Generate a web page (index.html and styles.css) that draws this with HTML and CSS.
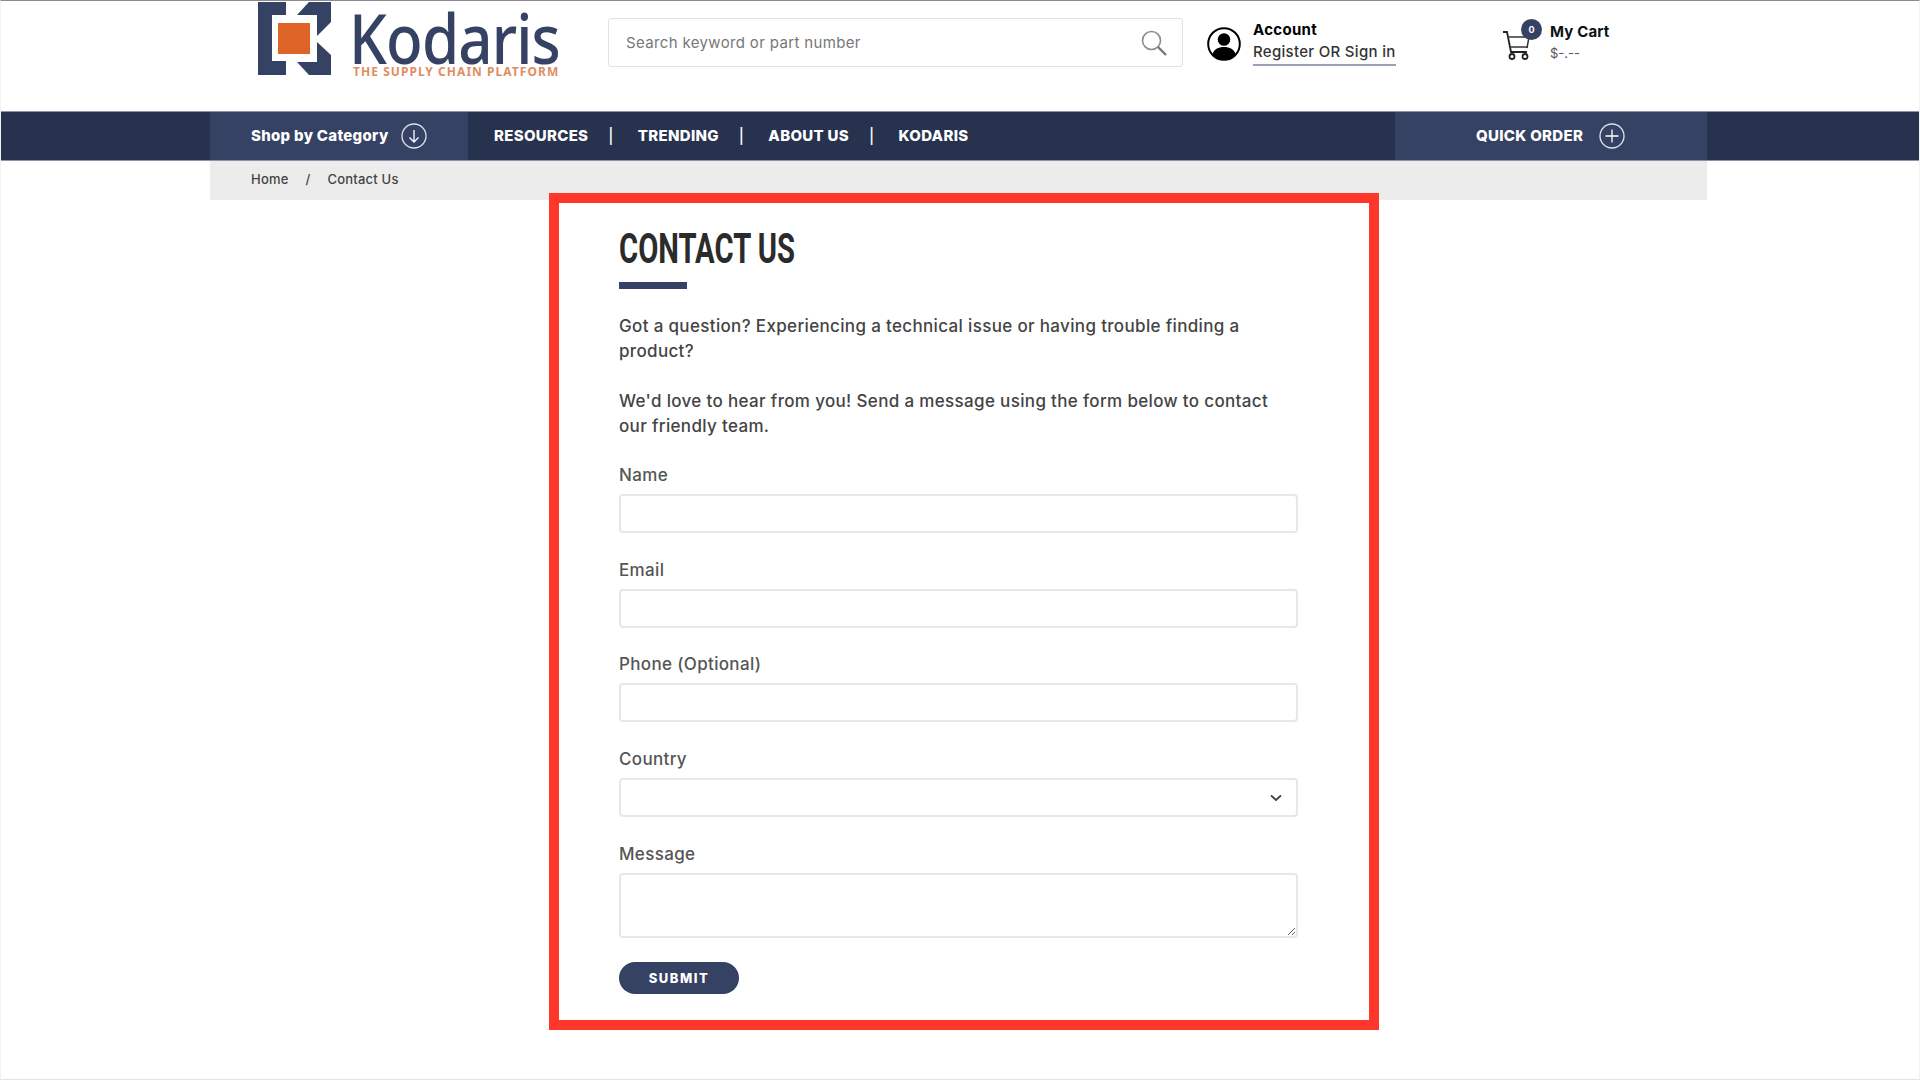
FILE: index.html
```html
<!DOCTYPE html>
<html lang="en">
<head>
<meta charset="utf-8">
<title>Contact Us - Kodaris</title>
<link rel="stylesheet" href="styles.css">
</head>
<body>
<div class="page">
  <header class="header">
    <a class="brand" href="#">
      <svg class="brand-mark" viewBox="0 0 73 73" width="73" height="73">
        <path fill="#354264" d="M0 0H28V13H14V59H28V73H0Z"/>
        <path fill="#354264" d="M39 13L51 0H73V20L59 34V13Z"/>
        <path fill="#354264" d="M59 40L73 53V73H51L39 60H59Z"/>
        <rect fill="#dd6426" x="20" y="21" width="32" height="31"/>
      </svg>
      <span class="brand-text">
        <span class="brand-name">Kodaris</span>
        <span class="brand-tag">THE SUPPLY CHAIN PLATFORM</span>
      </span>
    </a>
    <div class="search">
      <span class="search-text">Search keyword or part number</span>
      <svg class="search-icon" viewBox="0 0 26 26" width="26" height="26">
        <circle cx="10.5" cy="10.5" r="9" fill="none" stroke="#8d8d8d" stroke-width="1.6"/>
        <path d="M17 17L25 25" stroke="#777" stroke-width="2.4" fill="none"/>
      </svg>
    </div>
    <div class="account">
      <svg class="account-icon" viewBox="0 0 34 34" width="34" height="34">
        <circle cx="17" cy="17" r="15.8" fill="#fff" stroke="#000" stroke-width="2"/>
        <circle cx="17" cy="12.5" r="6.3" fill="#000"/>
        <path d="M5.5 27.5C7 22 11 20 17 20S27 22 28.5 27.5C25.5 31 21.500 33 17 33S8.500 31 5.500 27.500Z" fill="#000"/>
      </svg>
      <div class="account-text">
        <strong class="account-title">Account</strong>
        <a class="account-link" href="#">Register OR Sign in</a>
      </div>
    </div>
    <div class="cart">
      <div class="cart-graphic">
        <svg class="cart-icon" viewBox="0 0 30 30" width="30" height="30">
          <path d="M1 2H5L9 22H25" fill="none" stroke="#222" stroke-width="1.8"/>
          <path d="M6 7H28M8 17H26" fill="none" stroke="#333" stroke-width="1.5"/>
          <path d="M27 7L25 18" fill="none" stroke="#333" stroke-width="1.5"/>
          <circle cx="10" cy="26.500" r="2.500" fill="none" stroke="#222" stroke-width="1.800"/>
          <circle cx="23" cy="26.500" r="2.500" fill="none" stroke="#222" stroke-width="1.800"/>
        </svg>
        <span class="cart-badge">0</span>
      </div>
      <div class="cart-text">
        <strong class="cart-title">My Cart</strong>
        <span class="cart-price">$-.--</span>
      </div>
    </div>
  </header>

  <nav class="nav">
    <div class="nav-inner">
      <a class="nav-category" href="#">
        <span>Shop by Category</span>
        <svg viewBox="0 0 26 26" width="26" height="26">
          <circle cx="13" cy="13" r="12" fill="none" stroke="#dfe2ea" stroke-width="1.300"/>
          <path d="M13 7V19M8.500 14.500L13 19L17.500 14.500" fill="none" stroke="#fff" stroke-width="1.300"/>
        </svg>
      </a>
      <ul class="nav-links">
        <li>RESOURCES</li>
        <li class="sep">|</li>
        <li>TRENDING</li>
        <li class="sep">|</li>
        <li>ABOUT US</li>
        <li class="sep">|</li>
        <li>KODARIS</li>
      </ul>
      <a class="nav-quick" href="#">
        <span>QUICK ORDER</span>
        <svg viewBox="0 0 26 26" width="26" height="26">
          <circle cx="13" cy="13" r="12" fill="none" stroke="#dfe2ea" stroke-width="1.300"/>
          <path d="M13 6.500V19.500M6.500 13H19.500" fill="none" stroke="#fff" stroke-width="1.300"/>
        </svg>
      </a>
    </div>
  </nav>

  <div class="breadcrumb">
    <a href="#">Home</a>
    <span class="crumb-sep">/</span>
    <span>Contact Us</span>
  </div>

  <main class="main">
    <section class="contact">
      <h1 class="title">CONTACT US</h1>
      <div class="title-rule"></div>
      <p class="copy">Got a question? Experiencing a technical issue or having trouble finding a<br>product?</p>
      <p class="copy">We'd love to hear from you! Send a message using the form below to contact<br>our friendly team.</p>
      <form class="form">
        <label class="field"><span class="label">Name</span><input class="control" type="text"></label>
        <label class="field"><span class="label">Email</span><input class="control" type="text"></label>
        <label class="field"><span class="label">Phone (Optional)</span><input class="control" type="text"></label>
        <label class="field"><span class="label">Country</span>
          <span class="select-wrap">
            <select class="control select"><option></option></select>
            <svg class="chevron" viewBox="0 0 12 8" width="12" height="8"><path d="M1 1.500L6 6L11 1.500" fill="none" stroke="#444" stroke-width="1.800"/></svg>
          </span>
        </label>
        <label class="field field-last"><span class="label">Message</span><textarea class="control area"></textarea></label>
        <button class="submit" type="button">SUBMIT</button>
      </form>
    </section>
  </main>
</div>
</body>
</html>
```
FILE: styles.css
```css
* { box-sizing: border-box; }
html, body { margin: 0; padding: 0; }
body {
  background: #fff;
  color: #444;
  font-family: "Inter", "Liberation Sans", sans-serif;
  overflow: hidden;
}
a { color: inherit; text-decoration: none; }
.page {
  width: 1920px;
  height: 1080px;
  border-top: 1px solid #8b8b90;
  border-bottom: 1px solid #e2e2e2;
  border-left: 1px solid #f3f3f3;
  border-right: 1px solid #f3f3f3;
  overflow: hidden;
}

/* header */
.header {
  height: 110px;
  padding-left: 257px;
  display: flex;
  align-items: flex-start;
}
.brand {
  width: 350px;
  padding-top: 1px;
  display: flex;
  gap: 22px;
  flex: none;
}
.brand-mark { flex: none; }
.brand-text { display: flex; flex-direction: column; }
.brand-name {
  display: block;
  margin: 9px 0 0 -4px;
  font-family: "Noto Sans", sans-serif;
  font-size: 69px;
  font-weight: 500;
  line-height: 52px;
  color: #354264;
  letter-spacing: -1px;
  transform: scaleX(.87);
  transform-origin: left top;
  white-space: nowrap;
}
.brand-tag {
  margin-top: 3px;
  font-family: "Noto Sans", sans-serif;
  font-size: 12px;
  line-height: 12px;
  font-weight: 700;
  letter-spacing: 1.050px;
  color: #e08d63;
  white-space: nowrap;
}
.search {
  width: 575px;
  height: 49px;
  margin-top: 17px;
  padding: 0 15px 0 17px;
  border: 1px solid #e2e2e2;
  border-radius: 3px;
  display: flex;
  align-items: center;
  justify-content: space-between;
  flex: none;
}
.search-text { font-size: 15px; color: #777; letter-spacing: .35px; }
.account {
  margin-left: 24px;
  margin-top: 25px;
  width: 295px;
  display: flex;
  gap: 12px;
  flex: none;
}
.account-icon { flex: none; margin-top: 1px; }
.account-text { display: flex; flex-direction: column; margin-top: -6px; }
.account-title { font-size: 15px; line-height: 20px; font-weight: 700; color: #000; letter-spacing: .3px; }
.account-link {
  margin-top: 2px;
  padding-bottom: 2px;
  font-size: 15px;
  line-height: 20px;
  font-weight: 500;
  letter-spacing: .3px;
  color: #333;
  border-bottom: 2px solid #9aa0b5;
}
.cart { margin-top: 17px; display: flex; gap: 8px; flex: none; }
.cart-graphic { position: relative; width: 40px; padding-top: 12px; }
.cart-icon { display: block; }
.cart-badge {
  position: absolute;
  left: 19px;
  top: 1px;
  width: 21px;
  height: 21px;
  border-radius: 50%;
  background: #354264;
  color: #fff;
  font-size: 9px;
  font-weight: 700;
  line-height: 21px;
  text-align: center;
}
.cart-text { display: flex; flex-direction: column; padding-top: 4px; }
.cart-title { font-size: 15px; line-height: 20px; font-weight: 700; color: #111; letter-spacing: .15px; }
.cart-price { margin-top: 1px; font-size: 13px; line-height: 20px; color: #555; }

/* nav */
.nav {
  height: 50px;
  background: #27324f;
  border-top: 1px solid #8d93a6;
  border-bottom: 1px solid #8d93a6;
}
.nav-inner {
  width: 1497px;
  height: 100%;
  margin-left: 209px;
  display: flex;
  align-items: stretch;
  color: #fff;
  font-weight: 800;
  font-size: 15px;
  letter-spacing: .3px;
}
.nav-category {
  width: 258px;
  padding: 0 0 2px 41px;
  background: #354264;
  display: flex;
  align-items: center;
  gap: 13px;
  flex: none;
}
.nav-category svg, .nav-quick svg { flex: none; margin-top: 2px; }
.nav-links {
  list-style: none;
  margin: 0;
  padding: 0 0 2px 26px;
  display: flex;
  align-items: center;
  gap: 20px;
  flex: 1;
}
.sep { font-weight: 500; margin-right: 4px; }
.nav-quick {
  width: 312px;
  padding: 0 0 2px 81px;
  background: #354264;
  display: flex;
  align-items: center;
  gap: 16px;
  flex: none;
}

/* breadcrumb */
.breadcrumb {
  width: 1497px;
  height: 39px;
  margin-left: 209px;
  padding: 0 0 3px 41px;
  background: #ececec;
  display: flex;
  align-items: center;
  gap: 17px;
  font-size: 13px;
  font-weight: 500;
  letter-spacing: .2px;
  color: #444;
}

/* contact */
.main { padding-left: 548px; }
.contact {
  width: 830px;
  height: 837px;
  margin-top: -7px;
  padding: 22px 0 0 60px;
  border: 10px solid #ff372b;
  background: #fff;
  position: relative;
}
.title {
  margin: 0;
  font-family: "Roboto", "Liberation Sans", sans-serif;
  font-size: 43px;
  line-height: 46px;
  font-weight: 700;
  color: #2b2b2b;
  white-space: nowrap;
  transform: scaleX(.68);
  transform-origin: left center;
}
.title-rule { width: 68px; height: 7px; margin-top: 11px; background: #354264; }
.copy {
  margin: 0 0 25px;
  font-size: 17px;
  line-height: 25px;
  font-weight: 500;
  letter-spacing: .34px;
  color: #444;
  white-space: nowrap;
}
.title-rule + .copy { margin-top: 25px; }
.form { width: 679px; margin-top: -1px; }
.field { display: block; margin-bottom: 24.670px; }
.field-last { margin-bottom: 24px; }
.label {
  display: block;
  height: 25px;
  margin-bottom: 6px;
  font-size: 17px;
  line-height: 25px;
  font-weight: 500;
  letter-spacing: .34px;
  color: #555;
}
.control {
  display: block;
  width: 679px;
  height: 39px;
  border: 2px solid #e4e7ec;
  border-radius: 4px;
  background: #fff;
  outline: none;
  font: inherit;
}
.select-wrap { display: block; position: relative; }
.select { appearance: none; -webkit-appearance: none; }
.chevron { position: absolute; right: 16px; top: 16px; pointer-events: none; }
.area { height: 65px; resize: both; }
.submit {
  display: block;
  width: 120px;
  height: 32px;
  padding: 0;
  border: 0;
  border-radius: 16px;
  background: #354264;
  color: #fff;
  font-family: "Inter", sans-serif;
  font-size: 13px;
  font-weight: 800;
  letter-spacing: 1.500px;
}
```
